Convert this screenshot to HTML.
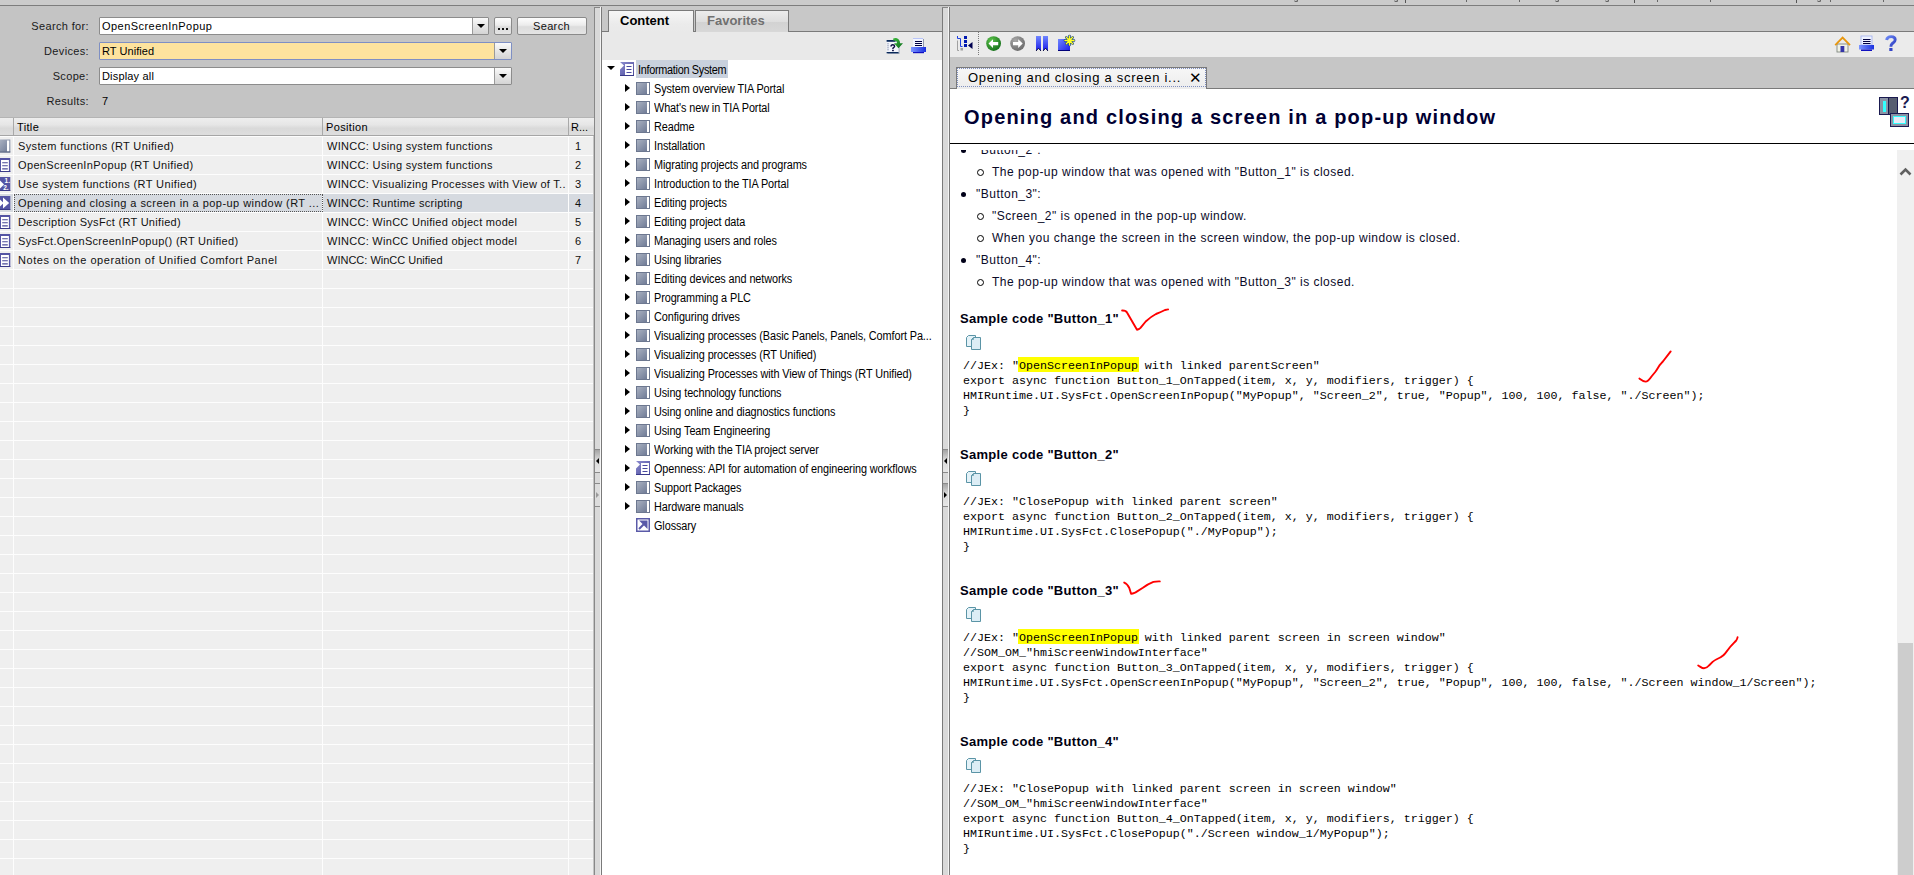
<!DOCTYPE html><html><head><meta charset="utf-8"><style>
*{margin:0;padding:0;box-sizing:border-box}
html,body{width:1914px;height:875px;overflow:hidden}
body{position:relative;background:#c9c9c9;font-family:"Liberation Sans",sans-serif;font-size:12px;color:#000}
.a{position:absolute}
.t{position:absolute;white-space:pre;line-height:1}
.lbl{position:absolute;white-space:pre;line-height:1;font-size:11px;letter-spacing:0.35px;color:#1a1a1a;text-align:right}
.ui{font-size:11px;letter-spacing:0.35px}
.combo{position:absolute;border:1px solid #8c8c8c;background:#fff;border-radius:1px}
.ddb{position:absolute;top:0;bottom:0;right:0;width:16px;border-left:1px solid #9a9a9a;background:linear-gradient(#fafafa,#e6e6e6 50%,#d4d4d4)}
.ddb:after{content:"";position:absolute;left:3.5px;top:5.5px;border-left:4px solid transparent;border-right:4px solid transparent;border-top:4.5px solid #000}
.btn{position:absolute;border:1px solid #8a8a8a;border-radius:2px;background:linear-gradient(#fdfdfd,#ececec 45%,#dcdcdc 55%,#e4e4e4)}
.row{position:absolute;left:0;width:593px;height:19px;border-top:1px solid #fdfdfd;background:#efefef}
.cell{position:absolute;top:0;height:18px;white-space:pre;line-height:1;font-size:12px;color:#111;overflow:hidden}
.vline{position:absolute;width:1px;background:#fdfdfd}
.tree{position:absolute;white-space:pre;line-height:1;font-size:12px;letter-spacing:-0.1px;color:#000;transform:scaleX(0.905);transform-origin:0 0}
.tri{position:absolute;width:0;height:0;border-top:4px solid transparent;border-bottom:4px solid transparent;border-left:5px solid #000}
.book{position:absolute;width:14px;height:13px;border:1px solid #6d7890;background:linear-gradient(135deg,#a8b0c0,#6a7692)}
.book:after{content:"";position:absolute;right:0px;top:0px;bottom:0px;width:2px;background:#fff}
.body{position:absolute;white-space:pre;line-height:1;font-size:12px;letter-spacing:0.48px;color:#0a0a28}
.code{position:absolute;white-space:pre;line-height:1;font-family:"Liberation Mono",monospace;font-size:11.67px;color:#000}
.hl{background:#ffff00}
.sh{position:absolute;white-space:pre;line-height:1;font-size:13px;font-weight:bold;letter-spacing:0.3px;color:#000010}
</style></head><body>
<div class="a" style="left:0;top:0;width:1914px;height:5px;background:#cbcbcb"></div>
<div class="a" style="left:0;top:5px;width:1914px;height:1px;background:#7d7d7d"></div>
<div class="a" style="left:1293.5px;top:0;width:4px;height:2px;border-bottom:1px solid #555;border-right:1px solid #555;border-radius:0 0 2px 2px"></div>
<div class="a" style="left:1393.5px;top:0;width:4px;height:2px;border-bottom:1px solid #555;border-right:1px solid #555;border-radius:0 0 2px 2px"></div>
<div class="a" style="left:1404.5px;top:0;width:1px;height:2.5px;background:#555"></div>
<div class="a" style="left:1465.5px;top:0;width:1px;height:1.5px;background:#666"></div>
<div class="a" style="left:1519px;top:0;width:1px;height:1.5px;background:#666"></div>
<div class="a" style="left:1555.0px;top:0;width:4px;height:2px;border-bottom:1px solid #555;border-right:1px solid #555;border-radius:0 0 2px 2px"></div>
<div class="a" style="left:1604.5px;top:0;width:4px;height:2px;border-bottom:1px solid #555;border-right:1px solid #555;border-radius:0 0 2px 2px"></div>
<div class="a" style="left:1634px;top:0;width:1px;height:2.5px;background:#555"></div>
<div class="a" style="left:1656.5px;top:0;width:1px;height:1.5px;background:#666"></div>
<div class="a" style="left:1709.5px;top:0;width:1px;height:1.5px;background:#666"></div>
<div class="a" style="left:1796px;top:0;width:1px;height:2.5px;background:#555"></div>
<div class="a" style="left:1817.0px;top:0;width:4px;height:2px;border-bottom:1px solid #555;border-right:1px solid #555;border-radius:0 0 2px 2px"></div>
<div class="a" style="left:1829.5px;top:0;width:1px;height:1.5px;background:#666"></div>
<div class="a" style="left:1883px;top:0;width:1px;height:1.5px;background:#666"></div>
<div class="a" style="left:0;top:6px;width:594px;height:869px;background:#c4c4c4"></div>
<div class="lbl" style="right:1825px;top:21px">Search for:</div>
<div class="lbl" style="right:1825px;top:46px">Devices:</div>
<div class="lbl" style="right:1825px;top:71px">Scope:</div>
<div class="lbl" style="right:1825px;top:96px">Results:</div>
<div class="combo" style="left:99px;top:17px;width:390px;height:18px"><div class="ddb"></div></div>
<div class="t ui" style="left:102px;top:21px;color:#000;letter-spacing:0.45px">OpenScreenInPopup</div>
<div class="btn" style="left:494px;top:17px;width:18px;height:18px"></div>
<div class="a" style="left:498px;top:28px;width:2.4px;height:2.4px;background:#111"></div>
<div class="a" style="left:502px;top:28px;width:2.4px;height:2.4px;background:#111"></div>
<div class="a" style="left:506px;top:28px;width:2.4px;height:2.4px;background:#111"></div>
<div class="btn" style="left:517px;top:17px;width:70px;height:18px"></div>
<div class="t ui" style="left:533px;top:21px;color:#111">Search</div>
<div class="combo" style="left:99px;top:42px;width:413px;height:18px;background:#fde39e;border-color:#7e8fc4"><div class="ddb" style="width:17px"></div></div>
<div class="t ui" style="left:102px;top:46px;letter-spacing:0.05px">RT Unified</div>
<div class="combo" style="left:99px;top:67px;width:413px;height:18px"><div class="ddb" style="width:17px"></div></div>
<div class="t ui" style="left:102px;top:71px;letter-spacing:0.17px">Display all</div>
<div class="t ui" style="left:102px;top:96px">7</div>
<div class="a" style="left:0;top:117px;width:594px;height:1px;background:#b4b4b4"></div>
<div class="a" style="left:0;top:118px;width:594px;height:17px;background:linear-gradient(#eeeeee,#e6e6e6 40%,#d9d9d9 60%,#dedede)"></div>
<div class="a" style="left:0;top:135px;width:594px;height:1px;background:#a6a6a6"></div>
<div class="a" style="left:13px;top:118px;width:1px;height:17px;background:#a9a9a9"></div>
<div class="a" style="left:322px;top:118px;width:1px;height:17px;background:#a9a9a9"></div>
<div class="a" style="left:568px;top:118px;width:1px;height:17px;background:#a9a9a9"></div>
<div class="t ui" style="left:17px;top:122px">Title</div>
<div class="t ui" style="left:326px;top:122px;letter-spacing:0.35px">Position</div>
<div class="t ui" style="left:571px;top:122px;letter-spacing:0px">R...</div>
<div class="row" style="top:136px;background:#efefef"></div>
<div class="row" style="top:155px;background:#efefef"></div>
<div class="row" style="top:174px;background:#efefef"></div>
<div class="row" style="top:193px;background:#d6dae0"></div>
<div class="row" style="top:212px;background:#efefef"></div>
<div class="row" style="top:231px;background:#efefef"></div>
<div class="row" style="top:250px;background:#efefef"></div>
<div class="row" style="top:269px;background:#efefef"></div>
<div class="row" style="top:288px;background:#efefef"></div>
<div class="row" style="top:307px;background:#efefef"></div>
<div class="row" style="top:326px;background:#efefef"></div>
<div class="row" style="top:345px;background:#efefef"></div>
<div class="row" style="top:364px;background:#efefef"></div>
<div class="row" style="top:383px;background:#efefef"></div>
<div class="row" style="top:402px;background:#efefef"></div>
<div class="row" style="top:421px;background:#efefef"></div>
<div class="row" style="top:440px;background:#efefef"></div>
<div class="row" style="top:459px;background:#efefef"></div>
<div class="row" style="top:478px;background:#efefef"></div>
<div class="row" style="top:497px;background:#efefef"></div>
<div class="row" style="top:516px;background:#efefef"></div>
<div class="row" style="top:535px;background:#efefef"></div>
<div class="row" style="top:554px;background:#efefef"></div>
<div class="row" style="top:573px;background:#efefef"></div>
<div class="row" style="top:592px;background:#efefef"></div>
<div class="row" style="top:611px;background:#efefef"></div>
<div class="row" style="top:630px;background:#efefef"></div>
<div class="row" style="top:649px;background:#efefef"></div>
<div class="row" style="top:668px;background:#efefef"></div>
<div class="row" style="top:687px;background:#efefef"></div>
<div class="row" style="top:706px;background:#efefef"></div>
<div class="row" style="top:725px;background:#efefef"></div>
<div class="row" style="top:744px;background:#efefef"></div>
<div class="row" style="top:763px;background:#efefef"></div>
<div class="row" style="top:782px;background:#efefef"></div>
<div class="row" style="top:801px;background:#efefef"></div>
<div class="row" style="top:820px;background:#efefef"></div>
<div class="row" style="top:839px;background:#efefef"></div>
<div class="row" style="top:858px;background:#efefef"></div>
<div class="vline" style="left:13px;top:136px;height:739px"></div>
<div class="vline" style="left:322px;top:136px;height:739px"></div>
<div class="vline" style="left:568px;top:136px;height:739px"></div>
<div class="t ui" style="left:18px;top:141px;color:#111;letter-spacing:0.36px">System functions (RT Unified)</div>
<div class="t ui" style="left:327px;top:141px;color:#111;letter-spacing:0.32px">WINCC: Using system functions</div>
<div class="t ui" style="left:575px;top:141px;color:#111">1</div>
<svg class="a" style="left:0;top:139px" width="11" height="14" viewBox="0 0 11 14"><defs><linearGradient id="gb0" x1="0" y1="0" x2="1" y2="1"><stop offset="0" stop-color="#a8b0c0"/><stop offset="1" stop-color="#6a7692"/></linearGradient></defs><rect x="0" y="0.5" width="10.3" height="13" fill="url(#gb0)"/><rect x="7" y="1.5" width="2.3" height="11" fill="#fff"/><rect x="0" y="12.5" width="10.3" height="1" fill="#5d6883"/></svg>
<div class="t ui" style="left:18px;top:160px;color:#111;letter-spacing:0.36px">OpenScreenInPopup (RT Unified)</div>
<div class="t ui" style="left:327px;top:160px;color:#111;letter-spacing:0.32px">WINCC: Using system functions</div>
<div class="t ui" style="left:575px;top:160px;color:#111">2</div>
<svg class="a" style="left:0;top:158px" width="11" height="14" viewBox="0 0 11 14"><rect x="0" y="0" width="10.3" height="14" fill="#5454a4"/><rect x="0" y="13" width="10.3" height="1" fill="#3a3a88"/><rect x="1" y="2" width="7.9" height="11" fill="#fff"/><path d="M2.2 4.7h5.6M2.2 7.8h5.6M2.2 10.9h5.6" stroke="#4a4a98" stroke-width="1.1"/></svg>
<div class="t ui" style="left:18px;top:179px;color:#111;letter-spacing:0.38px">Use system functions (RT Unified)</div>
<div class="t ui" style="left:327px;top:179px;color:#111;letter-spacing:0.28px">WINCC: Visualizing Processes with View of T..</div>
<div class="t ui" style="left:575px;top:179px;color:#111">3</div>
<svg class="a" style="left:0;top:177px" width="11" height="14" viewBox="0 0 11 14"><rect x="0" y="0" width="10.3" height="14" fill="#5454a4"/><rect x="0" y="13" width="10.3" height="1" fill="#3a3a88"/><path d="M0 3.5L4 7.5L0 11.5Z" fill="#fff"/><text x="4.6" y="6.2" font-family="Liberation Sans" font-weight="bold" font-size="6.5" fill="#fff">1.</text><text x="3.2" y="12.6" font-family="Liberation Sans" font-weight="bold" font-size="6.5" fill="#fff">2.</text></svg>
<div class="t ui" style="left:18px;top:198px;color:#111;letter-spacing:0.45px">Opening and closing a screen in a pop-up window (RT ...</div>
<div class="t ui" style="left:327px;top:198px;color:#111;letter-spacing:0.3px">WINCC: Runtime scripting</div>
<div class="t ui" style="left:575px;top:198px;color:#111">4</div>
<svg class="a" style="left:0;top:196px" width="11" height="14" viewBox="0 0 11 14"><rect x="0" y="0" width="10.3" height="14" fill="#5454a4"/><rect x="0" y="13" width="10.3" height="1" fill="#3a3a88"/><path d="M-2 1.5L3.6 7L-2 12.5Z M3 1.5L9.2 7L3 12.5Z" fill="#fff"/></svg>
<div class="t ui" style="left:18px;top:217px;color:#111;letter-spacing:0.3px">Description SysFct (RT Unified)</div>
<div class="t ui" style="left:327px;top:217px;color:#111;letter-spacing:0.28px">WINCC: WinCC Unified object model</div>
<div class="t ui" style="left:575px;top:217px;color:#111">5</div>
<svg class="a" style="left:0;top:215px" width="11" height="14" viewBox="0 0 11 14"><rect x="0" y="0" width="10.3" height="14" fill="#5454a4"/><rect x="0" y="13" width="10.3" height="1" fill="#3a3a88"/><rect x="1" y="2" width="7.9" height="11" fill="#fff"/><path d="M2.2 4.7h5.6M2.2 7.8h5.6M2.2 10.9h5.6" stroke="#4a4a98" stroke-width="1.1"/></svg>
<div class="t ui" style="left:18px;top:236px;color:#111;letter-spacing:0.3px">SysFct.OpenScreenInPopup() (RT Unified)</div>
<div class="t ui" style="left:327px;top:236px;color:#111;letter-spacing:0.28px">WINCC: WinCC Unified object model</div>
<div class="t ui" style="left:575px;top:236px;color:#111">6</div>
<svg class="a" style="left:0;top:234px" width="11" height="14" viewBox="0 0 11 14"><rect x="0" y="0" width="10.3" height="14" fill="#5454a4"/><rect x="0" y="13" width="10.3" height="1" fill="#3a3a88"/><rect x="1" y="2" width="7.9" height="11" fill="#fff"/><path d="M2.2 4.7h5.6M2.2 7.8h5.6M2.2 10.9h5.6" stroke="#4a4a98" stroke-width="1.1"/></svg>
<div class="t ui" style="left:18px;top:255px;color:#111;letter-spacing:0.54px">Notes on the operation of Unified Comfort Panel</div>
<div class="t ui" style="left:327px;top:255px;color:#111;letter-spacing:0.0px">WINCC: WinCC Unified</div>
<div class="t ui" style="left:575px;top:255px;color:#111">7</div>
<svg class="a" style="left:0;top:253px" width="11" height="14" viewBox="0 0 11 14"><rect x="0" y="0" width="10.3" height="14" fill="#5454a4"/><rect x="0" y="13" width="10.3" height="1" fill="#3a3a88"/><rect x="1" y="2" width="7.9" height="11" fill="#fff"/><path d="M2.2 4.7h5.6M2.2 7.8h5.6M2.2 10.9h5.6" stroke="#4a4a98" stroke-width="1.1"/></svg>
<div class="a" style="left:14px;top:194px;width:309px;height:18px;border:1px dotted #555"></div>
<div class="a" style="left:594px;top:7px;width:8px;height:868px;background:#d9d9d9;border-left:1px solid #888;border-right:1px solid #7a7a7a;border-top:1px solid #888"></div>
<div class="a" style="left:600px;top:7px;width:1px;height:868px;background:#f4f4f4"></div>
<div class="a" style="left:602px;top:6px;width:340px;height:26px;background:#c8c8c8"></div>
<div class="a" style="left:602px;top:31px;width:340px;height:1px;background:#7a7a7a"></div>
<div class="a" style="left:695px;top:10px;width:94px;height:22px;border:1px solid #7a7a7a;border-bottom:none;background:linear-gradient(#ececec,#dedede 50%,#d2d2d2 55%,#d8d8d8)"></div>
<div class="t" style="left:707px;top:14px;font-size:13px;font-weight:bold;color:#707070">Favorites</div>
<div class="a" style="left:608px;top:10px;width:86px;height:23px;border:1px solid #7a7a7a;border-bottom:none;background:linear-gradient(#f6f6f6,#ebebeb 60%,#e9e9e9)"></div>
<div class="t" style="left:620px;top:14px;font-size:13px;font-weight:bold;color:#000">Content</div>
<div class="a" style="left:602px;top:32px;width:340px;height:28px;background:#e9e9e9"></div>
<div class="a" style="left:609px;top:32px;width:84px;height:1px;background:#e9e9e9"></div>
<div class="a" style="left:602px;top:60px;width:340px;height:815px;background:#fff"></div>
<div class="a" style="left:601px;top:7px;width:1px;height:868px;background:#7a7a7a"></div>
<div class="a" style="left:942px;top:7px;width:1px;height:868px;background:#7a7a7a"></div>
<div class="a" style="left:636px;top:60px;width:92px;height:18px;background:#c9d1dd"></div>
<div class="a" style="left:607px;top:66px;width:0;height:0;border-left:4px solid transparent;border-right:4px solid transparent;border-top:4px solid #000"></div>
<div class="tree" style="left:638px;top:64px;letter-spacing:-0.32px">Information System</div>
<div class="tri" style="left:625px;top:84px"></div>
<div class="book" style="left:636px;top:82px"></div>
<div class="tree" style="left:654px;top:83px">System overview TIA Portal</div>
<div class="tri" style="left:625px;top:103px"></div>
<div class="book" style="left:636px;top:101px"></div>
<div class="tree" style="left:654px;top:102px">What&#x27;s new in TIA Portal</div>
<div class="tri" style="left:625px;top:122px"></div>
<div class="book" style="left:636px;top:120px"></div>
<div class="tree" style="left:654px;top:121px">Readme</div>
<div class="tri" style="left:625px;top:141px"></div>
<div class="book" style="left:636px;top:139px"></div>
<div class="tree" style="left:654px;top:140px">Installation</div>
<div class="tri" style="left:625px;top:160px"></div>
<div class="book" style="left:636px;top:158px"></div>
<div class="tree" style="left:654px;top:159px">Migrating projects and programs</div>
<div class="tri" style="left:625px;top:179px"></div>
<div class="book" style="left:636px;top:177px"></div>
<div class="tree" style="left:654px;top:178px">Introduction to the TIA Portal</div>
<div class="tri" style="left:625px;top:198px"></div>
<div class="book" style="left:636px;top:196px"></div>
<div class="tree" style="left:654px;top:197px">Editing projects</div>
<div class="tri" style="left:625px;top:217px"></div>
<div class="book" style="left:636px;top:215px"></div>
<div class="tree" style="left:654px;top:216px">Editing project data</div>
<div class="tri" style="left:625px;top:236px"></div>
<div class="book" style="left:636px;top:234px"></div>
<div class="tree" style="left:654px;top:235px">Managing users and roles</div>
<div class="tri" style="left:625px;top:255px"></div>
<div class="book" style="left:636px;top:253px"></div>
<div class="tree" style="left:654px;top:254px">Using libraries</div>
<div class="tri" style="left:625px;top:274px"></div>
<div class="book" style="left:636px;top:272px"></div>
<div class="tree" style="left:654px;top:273px">Editing devices and networks</div>
<div class="tri" style="left:625px;top:293px"></div>
<div class="book" style="left:636px;top:291px"></div>
<div class="tree" style="left:654px;top:292px">Programming a PLC</div>
<div class="tri" style="left:625px;top:312px"></div>
<div class="book" style="left:636px;top:310px"></div>
<div class="tree" style="left:654px;top:311px">Configuring drives</div>
<div class="tri" style="left:625px;top:331px"></div>
<div class="book" style="left:636px;top:329px"></div>
<div class="tree" style="left:654px;top:330px">Visualizing processes (Basic Panels, Panels, Comfort Pa...</div>
<div class="tri" style="left:625px;top:350px"></div>
<div class="book" style="left:636px;top:348px"></div>
<div class="tree" style="left:654px;top:349px">Visualizing processes (RT Unified)</div>
<div class="tri" style="left:625px;top:369px"></div>
<div class="book" style="left:636px;top:367px"></div>
<div class="tree" style="left:654px;top:368px">Visualizing Processes with View of Things (RT Unified)</div>
<div class="tri" style="left:625px;top:388px"></div>
<div class="book" style="left:636px;top:386px"></div>
<div class="tree" style="left:654px;top:387px">Using technology functions</div>
<div class="tri" style="left:625px;top:407px"></div>
<div class="book" style="left:636px;top:405px"></div>
<div class="tree" style="left:654px;top:406px">Using online and diagnostics functions</div>
<div class="tri" style="left:625px;top:426px"></div>
<div class="book" style="left:636px;top:424px"></div>
<div class="tree" style="left:654px;top:425px">Using Team Engineering</div>
<div class="tri" style="left:625px;top:445px"></div>
<div class="book" style="left:636px;top:443px"></div>
<div class="tree" style="left:654px;top:444px">Working with the TIA project server</div>
<div class="tri" style="left:625px;top:464px"></div>
<div class="tree" style="left:654px;top:463px">Openness: API for automation of engineering workflows</div>
<div class="tri" style="left:625px;top:483px"></div>
<div class="book" style="left:636px;top:481px"></div>
<div class="tree" style="left:654px;top:482px">Support Packages</div>
<div class="tri" style="left:625px;top:502px"></div>
<div class="book" style="left:636px;top:500px"></div>
<div class="tree" style="left:654px;top:501px">Hardware manuals</div>
<div class="tree" style="left:654px;top:520px">Glossary</div>
<div class="a" style="left:942px;top:7px;width:8px;height:1px;background:#888"></div>
<div class="a" style="left:943px;top:8px;width:6px;height:867px;background:#d9d9d9"></div>
<div class="a" style="left:948px;top:7px;width:1px;height:868px;background:#f4f4f4"></div>
<div class="a" style="left:949px;top:7px;width:1px;height:868px;background:#7a7a7a"></div>
<div class="a" style="left:950px;top:6px;width:964px;height:25px;background:#c8c8c8"></div>
<div class="a" style="left:950px;top:31px;width:964px;height:1px;background:#7a7a7a"></div>
<div class="a" style="left:950px;top:32px;width:964px;height:25px;background:#ebebeb"></div>
<div class="a" style="left:950px;top:57px;width:964px;height:31px;background:#c6c6c6"></div>
<div class="a" style="left:950px;top:88px;width:964px;height:1px;background:#7a7a7a"></div>
<div class="a" style="left:956px;top:67px;width:251px;height:22px;border:1px solid #7a7a7a;border-bottom:none;background:linear-gradient(#f7f7f7,#ececec)"></div>
<div class="a" style="left:957px;top:68px;width:249px;height:19px;border:1px dotted #7f8fc0"></div>
<div class="t" style="left:968px;top:71px;font-size:13px;letter-spacing:0.72px;color:#000">Opening and closing a screen i...</div>
<div class="t" style="left:1189px;top:70px;font-size:15px;color:#000">✕</div>
<div class="a" style="left:950px;top:89px;width:964px;height:786px;background:#fff"></div>
<div class="t" style="left:964px;top:107px;font-size:20px;font-weight:bold;letter-spacing:1.18px;color:#000033">Opening and closing a screen in a pop-up window</div>
<div class="a" style="left:950px;top:143px;width:964px;height:1px;background:#000"></div>
<div class="a" style="left:1897px;top:150px;width:17px;height:725px;background:#f0f0f0"></div>
<div class="a" style="left:1898px;top:643px;width:15px;height:232px;background:#cdcdcd"></div>
<svg class="a" style="left:1897px;top:163px" width="17" height="16" viewBox="0 0 17 16"><path d="M3.5 11.5L8.5 6.5L13.5 11.5" stroke="#606060" stroke-width="2.6" fill="none"/></svg>
<div class="a" style="left:950px;top:150px;width:947px;height:725px;overflow:hidden">
<div class="a" style="left:10.799999999999955px;top:-2.5px;width:5.5px;height:5.5px;border-radius:50%;background:#000018"></div>
<div class="body" style="left:26px;top:-6px">&quot;Button_2&quot;:</div>
<div class="a" style="left:27px;top:19px;width:7px;height:7px;border-radius:50%;border:1px solid #000"></div>
<div class="body" style="left:42px;top:16px">The pop-up window that was opened with &quot;Button_1&quot; is closed.</div>
<div class="a" style="left:10.799999999999955px;top:41.5px;width:5.5px;height:5.5px;border-radius:50%;background:#000018"></div>
<div class="body" style="left:26px;top:38px">&quot;Button_3&quot;:</div>
<div class="a" style="left:27px;top:63px;width:7px;height:7px;border-radius:50%;border:1px solid #000"></div>
<div class="body" style="left:42px;top:60px">&quot;Screen_2&quot; is opened in the pop-up window.</div>
<div class="a" style="left:27px;top:85px;width:7px;height:7px;border-radius:50%;border:1px solid #000"></div>
<div class="body" style="left:42px;top:82px">When you change the screen in the screen window, the pop-up window is closed.</div>
<div class="a" style="left:10.799999999999955px;top:107.5px;width:5.5px;height:5.5px;border-radius:50%;background:#000018"></div>
<div class="body" style="left:26px;top:104px">&quot;Button_4&quot;:</div>
<div class="a" style="left:27px;top:129px;width:7px;height:7px;border-radius:50%;border:1px solid #000"></div>
<div class="body" style="left:42px;top:126px">The pop-up window that was opened with &quot;Button_3&quot; is closed.</div>
<div class="sh" style="left:10px;top:162px">Sample code "Button_1"</div>
<svg class="a" style="left:16px;top:185px" width="16" height="16" viewBox="0 0 16 16"><path d="M0.5 2.5L2.5 0.5H9.5V11.5H0.5Z" fill="#e4f2f8" stroke="#5a94a6" stroke-width="1"/><path d="M5.5 4.5L7.5 2.5H14.5V14.5H5.5Z" fill="#dcedf5" stroke="#5a94a6" stroke-width="1"/><path d="M5.5 4.5H7.5V2.5" stroke="#5a94a6" stroke-width="0.8" fill="none"/></svg>
<div class="a" style="left:68px;top:207px;width:120.5px;height:15px;background:#ffff00"></div>
<div class="code" style="left:13px;top:211px">//JEx: &quot;OpenScreenInPopup with linked parentScreen&quot;</div>
<div class="code" style="left:13px;top:226px">export async function Button_1_OnTapped(item, x, y, modifiers, trigger) {</div>
<div class="code" style="left:13px;top:241px">HMIRuntime.UI.SysFct.OpenScreenInPopup(&quot;MyPopup&quot;, &quot;Screen_2&quot;, true, &quot;Popup&quot;, 100, 100, false, &quot;./Screen&quot;);</div>
<div class="code" style="left:13px;top:256px">}</div>
<div class="sh" style="left:10px;top:298px">Sample code "Button_2"</div>
<svg class="a" style="left:16px;top:321px" width="16" height="16" viewBox="0 0 16 16"><path d="M0.5 2.5L2.5 0.5H9.5V11.5H0.5Z" fill="#e4f2f8" stroke="#5a94a6" stroke-width="1"/><path d="M5.5 4.5L7.5 2.5H14.5V14.5H5.5Z" fill="#dcedf5" stroke="#5a94a6" stroke-width="1"/><path d="M5.5 4.5H7.5V2.5" stroke="#5a94a6" stroke-width="0.8" fill="none"/></svg>
<div class="code" style="left:13px;top:347px">//JEx: &quot;ClosePopup with linked parent screen&quot;</div>
<div class="code" style="left:13px;top:362px">export async function Button_2_OnTapped(item, x, y, modifiers, trigger) {</div>
<div class="code" style="left:13px;top:377px">HMIRuntime.UI.SysFct.ClosePopup(&quot;./MyPopup&quot;);</div>
<div class="code" style="left:13px;top:392px">}</div>
<div class="sh" style="left:10px;top:434px">Sample code "Button_3"</div>
<svg class="a" style="left:16px;top:457px" width="16" height="16" viewBox="0 0 16 16"><path d="M0.5 2.5L2.5 0.5H9.5V11.5H0.5Z" fill="#e4f2f8" stroke="#5a94a6" stroke-width="1"/><path d="M5.5 4.5L7.5 2.5H14.5V14.5H5.5Z" fill="#dcedf5" stroke="#5a94a6" stroke-width="1"/><path d="M5.5 4.5H7.5V2.5" stroke="#5a94a6" stroke-width="0.8" fill="none"/></svg>
<div class="a" style="left:68px;top:479px;width:120.5px;height:15px;background:#ffff00"></div>
<div class="code" style="left:13px;top:483px">//JEx: &quot;OpenScreenInPopup with linked parent screen in screen window&quot;</div>
<div class="code" style="left:13px;top:498px">//SOM_OM_&quot;hmiScreenWindowInterface&quot;</div>
<div class="code" style="left:13px;top:513px">export async function Button_3_OnTapped(item, x, y, modifiers, trigger) {</div>
<div class="code" style="left:13px;top:528px">HMIRuntime.UI.SysFct.OpenScreenInPopup(&quot;MyPopup&quot;, &quot;Screen_2&quot;, true, &quot;Popup&quot;, 100, 100, false, &quot;./Screen window_1/Screen&quot;);</div>
<div class="code" style="left:13px;top:543px">}</div>
<div class="sh" style="left:10px;top:585px">Sample code "Button_4"</div>
<svg class="a" style="left:16px;top:608px" width="16" height="16" viewBox="0 0 16 16"><path d="M0.5 2.5L2.5 0.5H9.5V11.5H0.5Z" fill="#e4f2f8" stroke="#5a94a6" stroke-width="1"/><path d="M5.5 4.5L7.5 2.5H14.5V14.5H5.5Z" fill="#dcedf5" stroke="#5a94a6" stroke-width="1"/><path d="M5.5 4.5H7.5V2.5" stroke="#5a94a6" stroke-width="0.8" fill="none"/></svg>
<div class="code" style="left:13px;top:634px">//JEx: &quot;ClosePopup with linked parent screen in screen window&quot;</div>
<div class="code" style="left:13px;top:649px">//SOM_OM_&quot;hmiScreenWindowInterface&quot;</div>
<div class="code" style="left:13px;top:664px">export async function Button_4_OnTapped(item, x, y, modifiers, trigger) {</div>
<div class="code" style="left:13px;top:679px">HMIRuntime.UI.SysFct.ClosePopup(&quot;./Screen window_1/MyPopup&quot;);</div>
<div class="code" style="left:13px;top:694px">}</div>
</div>
<div class="a" style="left:1879px;top:97px;width:31px;height:30px"><div class="a" style="left:0;top:0;width:19px;height:18px;border:1px solid #1a1a50;background:#565d70"></div><div class="a" style="left:1px;top:1px;width:9px;height:16px;background:#8a92a4;border-right:1px solid #1a1a50"></div><div class="a" style="left:4px;top:4px;width:3px;height:11px;background:#3ff"></div><div class="a" style="left:11px;top:16px;width:19px;height:14px;border:1px solid #1a1a50;background:#8a92a4"></div><div class="a" style="left:14px;top:19px;width:13px;height:8px;border:1px solid #3ff;background:#e8ecf8"></div><div class="t" style="left:21px;top:-2px;font-size:16px;font-weight:bold;color:#1a1a50">?</div></div>
<div class="a" style="left:595px;top:449px;width:5px;height:24px;background:linear-gradient(#a4a4a4,#d8d8d8 45%,#e6e6e6);border-top:1px solid #8a8a8a;border-bottom:1px solid #8a8a8a"></div>
<div class="a" style="left:596px;top:458px;width:0;height:0;border-top:3.5px solid transparent;border-bottom:3.5px solid transparent;border-right:3.5px solid #000"></div>
<div class="a" style="left:595px;top:483px;width:5px;height:24px;background:#dcdcdc;border-top:1px solid #8a8a8a;border-bottom:1px solid #8a8a8a"></div>
<div class="a" style="left:596px;top:492px;width:0;height:0;border-top:3.5px solid transparent;border-bottom:3.5px solid transparent;border-left:3.5px solid #999"></div>
<div class="a" style="left:943px;top:449px;width:5px;height:24px;background:linear-gradient(#a4a4a4,#d8d8d8 45%,#e6e6e6);border-top:1px solid #8a8a8a;border-bottom:1px solid #8a8a8a"></div>
<div class="a" style="left:944px;top:458px;width:0;height:0;border-top:3.5px solid transparent;border-bottom:3.5px solid transparent;border-right:3.5px solid #000"></div>
<div class="a" style="left:943px;top:483px;width:5px;height:24px;background:linear-gradient(#a4a4a4,#d8d8d8 45%,#e6e6e6);border-top:1px solid #8a8a8a;border-bottom:1px solid #8a8a8a"></div>
<div class="a" style="left:944px;top:492px;width:0;height:0;border-top:3.5px solid transparent;border-bottom:3.5px solid transparent;border-left:3.5px solid #000"></div>
<svg class="a" style="left:620px;top:62px" width="14" height="14" viewBox="0 0 14 14"><defs><linearGradient id="gI" x1="0" y1="0" x2="1" y2="1"><stop offset="0" stop-color="#8d8dd0"/><stop offset="1" stop-color="#4a4a9a"/></linearGradient></defs><path d="M0 0H14V14H0V7.5L4 3.5Z" fill="url(#gI)"/><path d="M0 13H14V14H0Z" fill="#3a3a8a"/><rect x="5" y="2" width="8" height="11" fill="#fff"/><path d="M6.5 4.5h5M6.5 7.5h5M6.5 10.5h5" stroke="#4a4aa0" stroke-width="1"/></svg>
<svg class="a" style="left:636px;top:461px" width="14" height="14" viewBox="0 0 14 14"><defs><linearGradient id="gI2" x1="0" y1="0" x2="1" y2="1"><stop offset="0" stop-color="#8d8dd0"/><stop offset="1" stop-color="#4a4a9a"/></linearGradient></defs><path d="M0 0H14V14H0V7.5L4 3.5Z" fill="url(#gI2)"/><path d="M0 13H14V14H0Z" fill="#3a3a8a"/><rect x="5" y="2" width="8" height="11" fill="#fff"/><path d="M6.5 4.5h5M6.5 7.5h5M6.5 10.5h5" stroke="#4a4aa0" stroke-width="1"/></svg>
<svg class="a" style="left:636px;top:518px" width="14" height="14" viewBox="0 0 14 14"><rect x="0" y="0" width="14" height="14" fill="#5a5aa8"/><rect x="1.5" y="1.5" width="11" height="11" fill="#fff"/><path d="M3 11L9.5 4.5M5.5 3.5H10.5V8.5Z" stroke="#5a5aa8" stroke-width="2" fill="#5a5aa8"/></svg>
<svg class="a" style="left:886px;top:37px" width="18" height="17" viewBox="0 0 18 17"><defs><linearGradient id="gA" x1="0" y1="0" x2="1" y2="1"><stop offset="0" stop-color="#3dbb3d"/><stop offset="1" stop-color="#0b6a1c"/></linearGradient></defs><rect x="1.6" y="4" width="12" height="13" fill="#a8b0c0"/><rect x="0.6" y="3" width="12" height="13" fill="#f2f4fb"/><rect x="0.6" y="3" width="9" height="1.8" fill="#0a2a5a"/><rect x="0.6" y="15" width="12" height="1.3" fill="#0a2a5a"/><path d="M1 6.8h2M1 8.8h2M1 10.8h2M1 12.8h2" stroke="#a0a8c0" stroke-width="0.9"/><path d="M5 9.6C5 8.4 6 7.8 6.9 7.8C7.9 7.8 8.6 8.4 8.6 9.2C8.6 10.1 7.7 10.4 7.3 10.8C7 11.1 6.9 11.4 6.9 12" stroke="#0a0a40" stroke-width="1.4" fill="none"/><rect x="6.1" y="12.8" width="1.7" height="1.4" fill="#0a0a40"/><path d="M7.2 1.5C7.6 1.2 8.5 1 9.3 1C12 1 14 3.2 14 6.2H17L12.5 11.3L8 6.2H11C11 4.3 9.6 3.4 7.2 3.6Z" fill="url(#gA)"/></svg>
<svg class="a" style="left:910px;top:37px" width="17" height="17" viewBox="0 0 17 17"><defs><linearGradient id="gP" x1="0" y1="0" x2="1" y2="0"><stop offset="0" stop-color="#7c95ff"/><stop offset="1" stop-color="#1a30e0"/></linearGradient></defs><rect x="4" y="2" width="10" height="9" fill="#9098b0"/><rect x="3" y="1" width="10" height="9" fill="#f2f5ff"/><rect x="3" y="1" width="10" height="1" fill="#b8c4f8"/><path d="M5 4.5h7M5 6.5h7M5 8.5h7" stroke="#000040" stroke-width="1.1"/><rect x="1" y="10" width="15" height="5" fill="url(#gP)"/><rect x="3" y="15" width="11" height="1.2" fill="#1010c0"/></svg>
<svg class="a" style="left:956px;top:35px" width="18" height="17" viewBox="0 0 18 17"><path d="M1.5 1V3.5H4.5V11.5H6.5" stroke="#1f40e0" stroke-width="1" fill="none"/><path d="M1.5 5.5V15.5H3" stroke="#a0a0a0" stroke-width="1" fill="none"/><rect x="4.5" y="13" width="2.5" height="2.5" fill="#a0a0a0"/><rect x="8" y="1" width="3" height="3" fill="#0018b0"/><rect x="8" y="5" width="3" height="3" fill="#0018b0"/><rect x="8" y="9" width="3" height="3" fill="#0018b0"/><path d="M12 10.5L16.5 7V14Z" fill="#000050"/></svg>
<div class="a" style="left:978px;top:32px;width:1px;height:24px;background:repeating-linear-gradient(#7a7a7a 0 1px,transparent 1px 2px)"></div>
<svg class="a" style="left:985px;top:35px" width="17" height="17" viewBox="0 0 17 17"><defs><radialGradient id="gB" cx="0.35" cy="0.3" r="0.75"><stop offset="0" stop-color="#5cc24a"/><stop offset="1" stop-color="#15701a"/></radialGradient></defs><circle cx="8.6" cy="8.6" r="7.4" fill="url(#gB)"/><path d="M3.5 8.6L8 4.3V6.9H13.2V10.3H8V12.9Z" fill="#fff"/></svg>
<svg class="a" style="left:1009px;top:35px" width="17" height="17" viewBox="0 0 17 17"><defs><radialGradient id="gF" cx="0.35" cy="0.3" r="0.75"><stop offset="0" stop-color="#a8a8a8"/><stop offset="1" stop-color="#6a6a6a"/></radialGradient></defs><circle cx="8.6" cy="8.6" r="7.4" fill="url(#gF)"/><path d="M13.7 8.6L9.2 4.3V6.9H4V10.3H9.2V12.9Z" fill="#fff"/></svg>
<svg class="a" style="left:1035px;top:35px" width="15" height="17" viewBox="0 0 15 17"><defs><linearGradient id="gK" x1="0" y1="0" x2="0" y2="1"><stop offset="0" stop-color="#6f86ff"/><stop offset="1" stop-color="#1c1ce8"/></linearGradient></defs><path d="M1 1H6V16L3.5 13.2L1 16Z" fill="url(#gK)"/><path d="M8 1H13V16L10.5 13.2L8 16Z" fill="url(#gK)"/><path d="M1 16L3.5 13.2L6 16M8 16L10.5 13.2L13 16" stroke="#000030" stroke-width="0.9" fill="none"/></svg>
<svg class="a" style="left:1056px;top:34px" width="20" height="18" viewBox="0 0 20 18"><defs><linearGradient id="gN" x1="0" y1="0" x2="1" y2="1"><stop offset="0" stop-color="#6f86ff"/><stop offset="1" stop-color="#1c1ce8"/></linearGradient></defs><rect x="2" y="5" width="12" height="12" fill="url(#gN)"/><rect x="2" y="16" width="12" height="1" fill="#00007a"/><g stroke="#0a3a90" stroke-width="2.6" stroke-linecap="round"><path d="M13.5 2V11M9 6.5H18M10.3 3.3L16.7 9.7M16.7 3.3L10.3 9.7"/></g><g stroke="#ffff20" stroke-width="1.4" stroke-linecap="round"><path d="M13.5 2V11M9 6.5H18M10.3 3.3L16.7 9.7M16.7 3.3L10.3 9.7"/></g><circle cx="13.5" cy="6.5" r="2" fill="#ffff20"/></svg>
<svg class="a" style="left:1834px;top:36px" width="18" height="17" viewBox="0 0 18 17"><rect x="3" y="8" width="11" height="8" fill="#f0f2e8" stroke="#808880" stroke-width="0.9"/><rect x="6.5" y="10" width="3.8" height="6" fill="#3434a8"/><path d="M1.2 9.2L8.6 1.6L16 9.2" stroke="#e8960c" stroke-width="1.8" fill="none"/></svg>
<svg class="a" style="left:1858px;top:35px" width="17" height="17" viewBox="0 0 17 17"><defs><linearGradient id="gP2" x1="0" y1="0" x2="1" y2="0"><stop offset="0" stop-color="#7c95ff"/><stop offset="1" stop-color="#1a30e0"/></linearGradient></defs><rect x="3" y="1" width="11" height="9" fill="#eef2ff" stroke="#a0b0f0" stroke-width="0.8"/><path d="M5 4.5h7.5M5 6.5h7.5M5 8.5h7.5" stroke="#000040" stroke-width="1.1"/><rect x="1" y="10" width="15" height="4.5" fill="url(#gP2)"/><rect x="3" y="14.5" width="11" height="1.5" fill="#1010c0"/></svg>
<svg class="a" style="left:1883px;top:34px" width="14" height="18" viewBox="0 0 14 18"><defs><linearGradient id="gQ" x1="0" y1="0" x2="1" y2="1"><stop offset="0" stop-color="#6a86f4"/><stop offset="1" stop-color="#2c3cc0"/></linearGradient></defs><path d="M3.6 6C4 3.4 6.2 2.6 8.2 2.6C10.6 2.6 12.2 3.8 12.2 5.8C12.2 7.8 10.4 8.6 9.2 9.6C8.2 10.4 7.9 11.2 7.9 12.8" stroke="url(#gQ)" stroke-width="2.9" fill="none"/><rect x="6.3" y="14" width="3.2" height="3" fill="#3444c8"/></svg>
<svg class="a" style="left:0;top:0" width="1914" height="875"><path d="M1122.1 310.5C1124 310.5 1126 310.3 1127 312.5L1137 329.7C1138 329.5 1139.5 328.8 1140.5 327.8L1145.7 321.5C1149 318.5 1153 315.5 1156 314C1159 312.8 1161 312 1165 310C1166.5 309.6 1167.5 309.4 1168.1 309.4" stroke="#ff0000" stroke-width="1.9" fill="none" stroke-linecap="round" stroke-linejoin="round"/></svg>
<svg class="a" style="left:0;top:0" width="1914" height="875"><path d="M1639.4 378.6C1641 379.8 1643 381.6 1645.5 381.6C1647.5 381.6 1649.5 379.5 1651.5 376.5L1655.6 371.5C1657.5 369 1658.5 367 1659.7 365.1C1661 363.5 1662 362.5 1662.9 361.5L1670.7 351.4" stroke="#ff0000" stroke-width="1.9" fill="none" stroke-linecap="round" stroke-linejoin="round"/></svg>
<svg class="a" style="left:0;top:0" width="1914" height="875"><path d="M1124.2 582.6C1126 583.2 1127.5 584.5 1129.2 587.8C1130 589.5 1130.5 592.5 1131.2 593.8C1133 593.6 1134 593 1135.6 592.4L1142.9 587.8C1146 585.5 1150 583.2 1153.4 581.9C1156 581.3 1158 581.4 1159.8 581.4" stroke="#ff0000" stroke-width="1.9" fill="none" stroke-linecap="round" stroke-linejoin="round"/></svg>
<svg class="a" style="left:0;top:0" width="1914" height="875"><path d="M1698.2 665.5C1700.5 666.8 1702 668.3 1704 668.3C1706 668.3 1707.5 667.3 1709 665.5L1712.6 661.9C1715 659.8 1718 658.5 1720.8 657.2C1722.5 656.3 1724 655 1725 653.7L1730.1 647C1732.5 644.2 1735 641.8 1736.3 640.3C1737.2 639 1737.4 638 1737.6 637.2" stroke="#ff0000" stroke-width="1.9" fill="none" stroke-linecap="round" stroke-linejoin="round"/></svg>
</body></html>
